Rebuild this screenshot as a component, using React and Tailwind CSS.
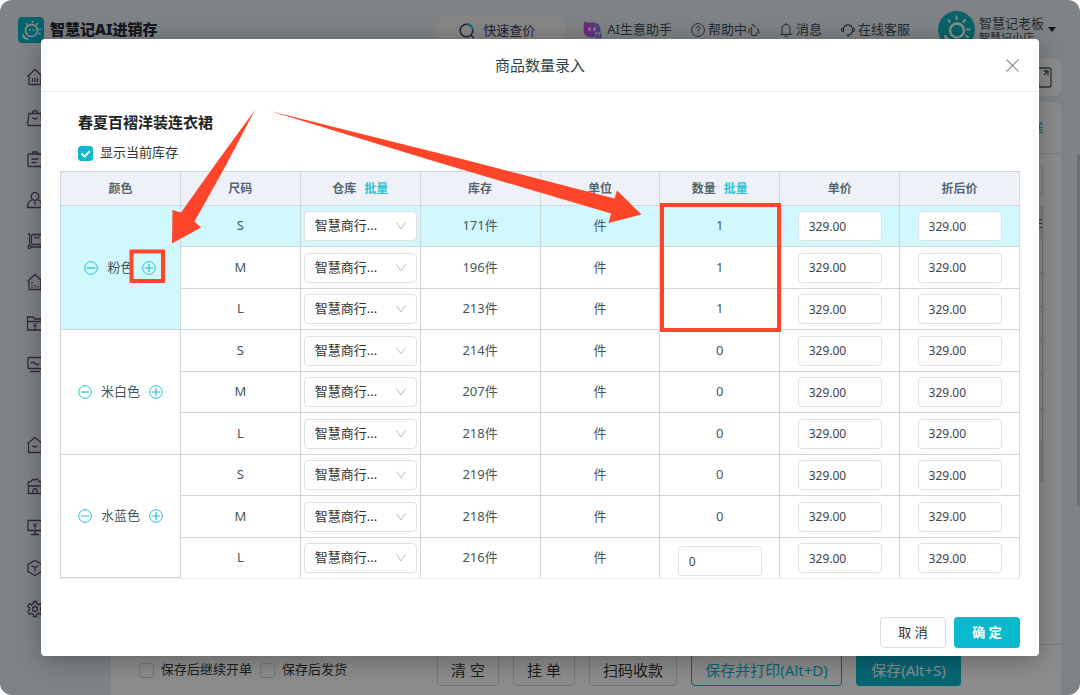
import { useState } from 'react';

const COLORS = [
  { name: '粉色', active: true, rows: [['S', 171, 1], ['M', 196, 1], ['L', 213, 1]] },
  { name: '米白色', rows: [['S', 214, 0], ['M', 207, 0], ['L', 218, 0]] },
  { name: '水蓝色', rows: [['S', 219, 0], ['M', 218, 0], ['L', 216, 0]] },
];

const COLUMNS = [
  { label: '颜色' },
  { label: '尺码' },
  { label: '仓库', batch: true },
  { label: '库存' },
  { label: '单位' },
  { label: '数量', batch: true },
  { label: '单价' },
  { label: '折后价' },
];

const NAV_TOP = [
  // home
  <><path d="M.5 7.500 8 .5l7.500 7M2 7v8.500h12V7" /><path d="M5.500 9v4M8 9v4M10.500 9v4" /></>,
  // bag
  <><path d="M2 3.500h12l1 11q0 1-1 1H1.500q-1 0-1-1zM5.500 3.500Q5.500.5 8 .5t2.500 3" /><path d="M5.500 7.500q2.500 3 5 0" /></>,
  // clipboard
  <><rect x="1" y="3" width="14" height="12.500" rx="1" /><path d="M5.500 3V1h5v2M4.500 8h7M4.500 11.500h5" /></>,
  // customer
  <><circle cx="8" cy="4.500" r="3.800" /><path d="M5 8Q.5 9.500.5 15.500h15Q15.500 9.500 11 8M8 9.500v3.500" /></>,
  // trolley
  <><path d="M1 1h1.500v11.500M4 14h11.500" /><circle cx="2.500" cy="14" r="1.500" /><rect x="4.500" y="1.500" width="12" height="10" rx="1" /><path d="M8 2v3.500l2-1 2 1V2" strokeWidth=".9" /></>,
  // warehouse
  <><path d="M.5 7.500 8 .5l7.500 7M2 7v8.500h12V7" /><path d="M5 8v6M8 11v3M11 12v2" strokeDasharray="1.500 1" /></>,
  // money folder
  <><path d="M.5 15V2H6l1.500 2h8v11zM.5 6.500h15" /><path d="m6 8 2 2 2-2M8 10v4M6 11h4" strokeWidth=".9" /></>,
  // report screen
  <><rect x="1" y="1.500" width="14" height="11" rx="1" /><path d="M4 7.500q2-2.500 4 0t4 0M3 15.500h10" /></>,
];

const NAV_BOTTOM = [
  <><path d="M.5 6.500 8 .5l7.500 6M1.500 6v9.500h13V6" /><path d="M5.500 8.500q2.500 3 5 0" /></>,
  <><path d="M1.500 8Q-.5 3.500 4 3.500 5.500.5 8 2q3-2 4 1.500 4 0 2.500 4.500M1.500 8v7.500h13V8zM6 15.500V12q2-2.500 4 0v3.500" /></>,
  <><path d="M1 1.500h14v10H1zM8 11.500v4M4 15.500h8" /><path d="m6 4 2 2 2-2M8 6v4M6 7h4" strokeWidth=".9" /></>,
  <><path d="m8 .5 7 4v7l-7 4-7-4v-7z" /><path d="m4.500 5.500 3.500 2 3.500-2M8 7.500v4" /></>,
  <><path d="M6.500.5h3v2.200l2 1 2-1 1.700 2.800-1.700 1.500v2l1.700 1.500-1.700 2.800-2-1-2 1v2.200h-3v-2.200l-2-1-2 1L.8 10.500 2.500 9V7L.8 5.500 2.500 2.700l2 1 2-1z" /><circle cx="8" cy="8" r="2.500" /></>,
];

function NavIcon({ children }) {
  return (
    <li className="h-4">
      <svg viewBox="0 0 16 16" className="size-4 overflow-visible" fill="none" stroke="#4d5069" strokeWidth="1.300">
        {children}
      </svg>
    </li>
  );
}

function SunFace({ className }) {
  return (
    <svg viewBox="0 0 26 26" className={className} fill="none" stroke="#fff" strokeLinecap="round">
      <circle cx="13.500" cy="13.500" r="6" strokeWidth="1.700" />
      <path d="M14.500 4.500v1M19.500 6.500l-.7.800M22.500 12h-1M22 17l-.8-.4M8.500 6.500l.5.700" strokeWidth="1.600" />
      <path d="M5 18q1 3.500 4.500 4" strokeWidth="1.800" />
      <circle cx="11.800" cy="13" r=".6" fill="#fff" strokeWidth=".6" />
      <circle cx="15.500" cy="13" r=".6" fill="#fff" strokeWidth=".6" />
    </svg>
  );
}

function AvatarMark() {
  return (
    <svg viewBox="0 0 37 37" className="size-[37px]" fill="none" stroke="#fff" strokeLinecap="round">
      <circle cx="18.500" cy="18.500" r="18.500" fill="#12b4bd" stroke="none" />
      <circle cx="19" cy="19.500" r="7" strokeWidth="2.400" />
      <path d="M18.500 5.500v2.500M27 9l-1.600 1.800M31.500 18.500h-2.500M30 26l-2-1.200M10.500 9l1.200 1.600" strokeWidth="2" />
      <path d="M7.500 25.500q2 6 8 7" strokeWidth="3" />
    </svg>
  );
}

function TopBar() {
  return (
    <header className="flex h-[59px] shrink-0 items-center pl-[18px] pr-6 text-[13px] text-[#414b57]">
      <div className="flex items-center gap-[6px]">
        <span className="flex size-[26px] items-center justify-center rounded bg-[#08b6c8]">
          <SunFace className="size-[26px]" />
        </span>
        <span className="text-[15px] font-black text-[#252b36]">智慧记AI进销存</span>
      </div>
      <div className="ml-auto flex items-center">
        <button className="mr-[17px] mt-[3px] flex h-8 w-[130px] items-center justify-center gap-2 rounded-full bg-[#f8f5f2] pr-2 text-[#3a4470]">
          <svg viewBox="0 0 16 16" className="size-4" fill="none" strokeWidth="1.500">
            <circle cx="7.500" cy="7.500" r="6.300" stroke="#34406e" />
            <path d="M8 1.200a6.300 6.300 0 0 1 5.700 5.500" stroke="#22c3d4" strokeWidth="2" />
            <path d="m12 12 3 3" stroke="#34406e" />
          </svg>
          快速查价
        </button>
        <a href="#ai" className="flex items-center gap-[5px]">
          <svg viewBox="0 0 19 18" className="h-[18px] w-[19px]">
            <defs>
              <linearGradient id="ai" x1="0" y1="0" x2="1" y2="0">
                <stop offset="0" stopColor="#d548dd" />
                <stop offset="1" stopColor="#8177ea" />
              </linearGradient>
            </defs>
            <path d="M1 2q0-2 2-1 2 1 6 .5Q17.500 1 17.500 9q0 7.500-8.500 7.500T.5 9z" fill="url(#ai)" />
            <path d="M6.500 7v2M11.500 7v2" stroke="#fff" strokeWidth="2" strokeLinecap="round" />
            <rect x="12" y="11" width="7" height="7" rx="1" fill="#cfc8f3" />
            <path d="m13 17 1.500-4 1.500 4M17.500 13v4" stroke="#6a50dc" fill="none" />
          </svg>
          AI生意助手
        </a>
        <a href="#help" className="ml-[19px] flex items-center gap-[3px]">
          <svg viewBox="0 0 14 14" className="size-[14px]" fill="none" stroke="currentColor">
            <circle cx="7" cy="7" r="6.400" />
            <path d="M5 5.500q0-2 2-2t2 1.800Q9 6.500 7 7.500v1M7 9.700v1" />
          </svg>
          帮助中心
        </a>
        <a href="#message" className="ml-5 flex items-center gap-1">
          <svg viewBox="0 0 12 14" className="h-[14px] w-3" fill="none" stroke="currentColor">
            <path d="M2 11V6q0-4.500 4-4.500T10 6v5M.5 11.500h11M6 0v1.500M4.500 13.300h3" />
          </svg>
          消息
        </a>
        <a href="#service" className="ml-[19px] flex items-center gap-[3px]">
          <svg viewBox="0 0 14 14" className="size-[14px]" fill="none" stroke="currentColor" strokeWidth="1.100">
            <path d="M2.500 8.500V5.500a4.600 4.600 0 0 1 9 0v3q-1 3-3.500 3.200l-1 1.500-1-1.700M2.500 5Q.6 5 .6 6.800T2.500 8.500M11.500 5q1.900 0 1.900 1.800t-1.900 1.700" />
          </svg>
          在线客服
        </a>
        <div className="ml-7 flex items-center gap-1">
          <AvatarMark />
          <div>
            <div className="leading-4">智慧记老板</div>
            <div className="text-[11px] leading-[14px]">智慧记小店</div>
          </div>
          <svg viewBox="0 0 8 5" className="h-[5px] w-2"><path d="M0 0h8L4 5z" fill="#252b36" /></svg>
        </div>
      </div>
    </header>
  );
}

function SideBar() {
  return (
    <nav className="w-[111px] shrink-0 pl-[27px] pt-[10px]">
      <ul className="flex flex-col gap-[25px]">
        {NAV_TOP.map((icon, i) => <NavIcon key={i}>{icon}</NavIcon>)}
      </ul>
      <ul className="mt-[65px] flex flex-col gap-[25px]">
        {NAV_BOTTOM.map((icon, i) => <NavIcon key={i}>{icon}</NavIcon>)}
      </ul>
    </nav>
  );
}

function OrderPage() {
  return (
    <main className="flex min-w-0 flex-1 flex-col pr-[19px]">
      <div className="flex h-[37px] items-center justify-end rounded-md bg-white pr-[9px]">
        <svg viewBox="0 0 21 21" className="size-[21px]" fill="none" stroke="#4b5e63" strokeWidth="1.300">
          <rect x="1" y="1" width="19" height="19" rx="2" />
          <path d="M13 8l4-4M12.500 4H17v4.500M8 13l-4 4M8.500 17H4v-4.500" />
        </svg>
      </div>
      <section className="mt-[6px] flex flex-1 flex-col rounded-t-md bg-white">
        <div className="flex h-[52px] items-center justify-end border-b border-[#e2e2e6] pr-[18px] text-[13px] text-[#0bb9cf]">据</div>
        <div className="pr-[18px] pt-3">
          <div className="h-[29px] rounded border border-[#cfd2d6]" />
          <div className="mt-[11px] border border-[#c8cfd8]">
            <div className="flex h-8 items-center justify-end bg-[#eef1f7]">
              <svg viewBox="0 0 12 12" className="size-3" stroke="#4b5e63"><path d="M0 2.500h12M0 6.500h12M0 10.500h12" /></svg>
            </div>
            {[0, 1, 2, 3, 4, 5].map((n) => <div key={n} className="h-[34px] border-b border-[#c8cfd8]" />)}
            <div className="h-[38px] bg-[#eef1f7]" />
          </div>
        </div>
      </section>
      <footer className="flex h-[51px] shrink-0 items-center justify-between border-t border-[#dedede] bg-white pl-7 pr-[100px] text-[15px] text-[#333]">
        <div className="flex gap-2 text-[13px]">
          <label className="flex items-center gap-[7px]">
            <input type="checkbox" className="size-[15px] appearance-none rounded-[3px] border border-[#d5d5d5]" />
            保存后继续开单
          </label>
          <label className="flex items-center gap-[7px]">
            <input type="checkbox" className="size-[15px] appearance-none rounded-[3px] border border-[#d5d5d5]" />
            保存后发货
          </label>
        </div>
        <div className="flex gap-[14px]">
          <button className="h-8 w-[62px] rounded border border-[#d5d5d5]">清 空</button>
          <button className="h-8 w-[62px] rounded border border-[#d5d5d5]">挂 单</button>
          <button className="h-8 w-[88px] rounded border border-[#d5d5d5]">扫码收款</button>
          <button className="h-8 w-[151px] rounded border border-[#0bb9cf] text-[#0bb9cf]">保存并打印(Alt+D)</button>
          <button className="h-8 w-[105px] rounded bg-[#0bb9cf] text-white">保存(Alt+S)</button>
        </div>
      </footer>
    </main>
  );
}

function StepButton({ label, plus }) {
  return (
    <button aria-label={label}>
      <svg viewBox="0 0 14 14" className="size-[14px]" fill="none" stroke="#22c0d3">
        <circle cx="7" cy="7" r="6.300" />
        <path d={plus ? 'M3 7h8M7 3v8' : 'M3 7h8'} strokeWidth="1.200" />
      </svg>
    </button>
  );
}

function NumberBox({ label, value }) {
  return (
    <input
      aria-label={label}
      defaultValue={value}
      className="mx-auto block h-[30px] w-[84px] rounded border border-[#dfe0e2] bg-white px-[10px] text-[12px] text-[#404548]"
    />
  );
}

function WarehouseSelect() {
  return (
    <div className="relative mx-[3px]">
      <select aria-label="仓库" className="block h-[30px] w-full appearance-none rounded border border-[#dfe0e2] bg-white pl-[10px] text-[13px] text-[#333]">
        <option>智慧商行...</option>
      </select>
      <svg viewBox="0 0 10 8" className="pointer-events-none absolute right-[11px] top-[11px] h-2 w-[10px]" fill="none" stroke="#bfbfbf">
        <path d="m.5.5 4.500 6.500L9.500.5" />
      </svg>
    </div>
  );
}

function QuantityTable({ showStock }) {
  const cell = 'border-l border-t border-[#d0d6dd] p-0';
  return (
    <table className="mt-2 w-full table-fixed border-separate border-spacing-0 border-b border-r border-b-[#eceef0] border-r-[#d9dde3] text-center text-[13px] text-[#46565a]">
      <thead>
        <tr className="h-[34px] bg-[#eef1f7]">
          {COLUMNS.map((col) => (
            <th key={col.label} className={`${cell} text-[12px] font-bold text-[#56666a]`}>
              {col.label}
              {col.batch && <button className="ml-2 text-[#2cc3d6]">批量</button>}
            </th>
          ))}
        </tr>
      </thead>
      <tbody>
        {COLORS.flatMap((color, c) =>
          color.rows.map(([size, stock, qty], r) => (
            <tr key={color.name + size} className={`h-[41px] even:h-[42px] ${color.active && r === 0 ? 'bg-[#d1f8fe]' : ''}`}>
              {r === 0 && (
                <td rowSpan={3} className={`${cell} ${color.active ? 'bg-[#d1f8fe]' : ''} ${c === 2 ? 'border-b' : ''}`}>
                  <div className="flex items-center justify-center gap-[9px]">
                    <StepButton label="减少" />
                    {color.name}
                    <StepButton label="增加" plus />
                  </div>
                </td>
              )}
              <td className={cell}>{size}</td>
              <td className={cell}><WarehouseSelect /></td>
              <td className={cell}>{showStock && `${stock}件`}</td>
              <td className={cell}>件</td>
              {c === 2 && r === 2 ? (
                <td className={`${cell} pt-[6px]`}><NumberBox label="数量" value="0" /></td>
              ) : (
                <td className={cell}>{qty}</td>
              )}
              <td className={cell}><NumberBox label="单价" value="329.00" /></td>
              <td className={cell}><NumberBox label="折后价" value="329.00" /></td>
            </tr>
          ))
        )}
      </tbody>
    </table>
  );
}

// Red guide arrows and frames, drawn over the dialog
function Guide() {
  return (
    <svg viewBox="41 39 998 617" className="pointer-events-none absolute left-0 top-0 h-[617px] w-[998px]">
      <g fill="#ff462a">
        <path d="M255 110 217 162 181 212.500 172.500 210 172 243.500 201 227.500 194.500 221.500 225 167z" />
        <path d="M270 111 460 158.500 614.500 198.500 617 190.500 641.500 214.500 608.500 223 611 213.500 430 160z" />
      </g>
      <g fill="none" stroke="#ff462a" strokeWidth="4">
        <rect x="131.500" y="251.500" width="31.500" height="29.500" />
        <rect x="662" y="205" width="117" height="125" />
      </g>
    </svg>
  );
}

function QuantityDialog() {
  const [showStock, setShowStock] = useState(true);

  return (
    <div role="dialog" aria-label="商品数量录入" className="relative w-full rounded bg-white shadow-[0_4px_24px_rgba(0,0,0,0.3)]">
      <div className="relative flex h-[53px] items-center justify-center border-b border-[#eeeff0]">
        <h2 className="text-[15px] text-[#2f4347]">商品数量录入</h2>
        <button aria-label="关闭" className="absolute right-5 top-5">
          <svg viewBox="0 0 13 13" className="size-[13px]" stroke="#8f8f8f" strokeWidth="1.200"><path d="m.5.5 12 12M12.500.5l-12 12" /></svg>
        </button>
      </div>
      <div className="px-[19px] pb-2 pt-[19px]">
        <h3 className="pl-[18px] text-[15px] font-bold leading-[22px] text-[#222]">春夏百褶洋装连衣裙</h3>
        <label className="mt-[10px] flex h-5 items-center gap-[7px] pl-[18px] text-[13px] text-[#333]">
          <span className="relative flex size-[15px]">
            <input
              type="checkbox"
              checked={showStock}
              onChange={(e) => setShowStock(e.target.checked)}
              className="size-[15px] appearance-none rounded-[3px] border border-[#0bb9cf] checked:bg-[#0bb9cf]"
            />
            <svg viewBox="0 0 15 15" className="pointer-events-none absolute inset-0" fill="none" stroke="#fff" strokeWidth="2">
              <path d="m3.500 7.500 3 3L12 5" />
            </svg>
          </span>
          显示当前库存
        </label>
        <QuantityTable showStock={showStock} />
        <div className="mt-[38px] flex justify-end gap-2 text-[13px]">
          <button className="h-[31px] w-[66px] rounded border border-[#dcdcdc] text-[#333]">取 消</button>
          <button className="h-[31px] w-[66px] rounded bg-[#0bb9cf] font-bold text-white">确 定</button>
        </div>
      </div>
      <Guide />
    </div>
  );
}

export default function App() {
  return (
    <div className="bg-white font-['Noto_Sans','Noto_Sans_CJK_SC',sans-serif]">
      <div className="relative flex min-h-screen flex-col overflow-hidden rounded-xl bg-[#e8eef4]">
        <TopBar />
        <div className="flex flex-1">
          <SideBar />
          <OrderPage />
        </div>
        <div className="absolute right-0 top-[154px] h-[352px] w-[3px] rounded bg-[#c4c8cd]" />
        <div className="absolute inset-0 flex items-start bg-black/45 px-[41px] pt-[39px]">
          <QuantityDialog />
        </div>
      </div>
    </div>
  );
}
